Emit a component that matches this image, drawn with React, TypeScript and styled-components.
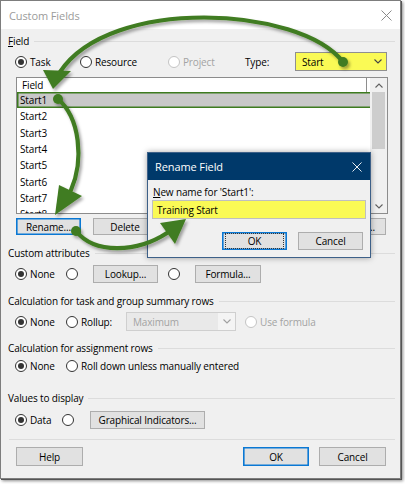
import React from 'react';
import styled, { createGlobalStyle } from 'styled-components';

const Global = createGlobalStyle`
  html, body { margin: 0; padding: 0; background: #ffffff; }
  body {
    font-family: "Open Sans", "Noto Sans", sans-serif;
    font-size: 10px;
    font-weight: 500;
    letter-spacing: -0.15px;
    color: #000;
  }
  * { box-sizing: border-box; }
`;

const Stage = styled.div`
  position: relative;
  width: 405px;
  height: 484px;
  overflow: hidden;
`;

const Window = styled.div`
  width: 401px;
  height: 479px;
  border: 1px solid #7d7d7d;
  box-shadow: 1px 1px 0 #555, 2px 2px 3px rgba(0, 0, 0, 0.45);
  background: #f0f0f0;
  display: flex;
  flex-direction: column;
`;

const TitleBar = styled.div`
  height: 28px;
  flex: none;
  background: #ffffff;
  display: flex;
  align-items: center;
  justify-content: space-between;
  padding: 0 8px 0 8px;
`;

const TitleText = styled.span<{ $light?: boolean }>`
  font-size: 11px;
  font-weight: 400;
  letter-spacing: -0.1px;
  color: ${(p) => (p.$light ? '#ffffff' : '#9b9b9b')};
`;

const Body = styled.div`
  display: flex;
  flex-direction: column;
  padding: 0 5px 0 7px;
`;

const GroupHeader = styled.div<{ $mt: number }>`
  display: flex;
  align-items: center;
  gap: 5px;
  height: 14px;
  margin-top: ${(p) => p.$mt}px;
`;

const Rule = styled.div`
  flex: 1;
  height: 1px;
  background: #dcdcdc;
`;

const U = styled.span`
  text-decoration: underline;
  text-underline-offset: 1px;
`;

const Row = styled.div<{ $mt: number; $h?: number }>`
  display: flex;
  align-items: center;
  height: ${(p) => p.$h ?? 18}px;
  margin-top: ${(p) => p.$mt}px;
  padding-left: 7px;
`;

const Option = styled.div<{ $w?: number; $disabled?: boolean }>`
  display: flex;
  align-items: center;
  gap: 3px;
  flex: none;
  width: ${(p) => (p.$w ? `${p.$w}px` : 'auto')};
  color: ${(p) => (p.$disabled ? '#a3a3a3' : '#000')};
`;

const Radio = styled.span<{ $checked?: boolean; $disabled?: boolean }>`
  width: 12px;
  height: 12px;
  flex: none;
  border-radius: 50%;
  border: 1px solid ${(p) => (p.$disabled ? '#c4c4c4' : '#333333')};
  background: #ffffff;
  display: flex;
  align-items: center;
  justify-content: center;
  &::after {
    content: '';
    width: 6px;
    height: 6px;
    border-radius: 50%;
    background: #333333;
    display: ${(p) => (p.$checked ? 'block' : 'none')};
  }
`;

const Label = styled.span<{ $w?: number }>`
  flex: none;
  width: ${(p) => (p.$w ? `${p.$w}px` : 'auto')};
`;

const Select = styled.div<{ $w: number; $yellow?: boolean; $disabled?: boolean; $ml?: number }>`
  flex: none;
  width: ${(p) => p.$w}px;
  height: 19px;
  margin-left: ${(p) => p.$ml ?? 0}px;
  display: flex;
  align-items: center;
  justify-content: space-between;
  padding-left: 6px;
  background: ${(p) => (p.$yellow ? '#fafa55' : p.$disabled ? '#e9e9e9' : '#fff')};
  border: 1px solid ${(p) => (p.$yellow ? '#8f8f8f' : '#cfcfcf')};
  color: ${(p) => (p.$disabled ? '#a3a3a3' : '#000')};
`;

const ChevronBox = styled.span<{ $disabled?: boolean }>`
  width: 17px;
  height: 100%;
  display: flex;
  align-items: center;
  justify-content: center;
  background: ${(p) => (p.$disabled ? '#f4f4f4' : 'transparent')};
`;

const Chevron = ({ up, color = '#444' }: { up?: boolean; color?: string }) => (
  <svg width="8" height="5" viewBox="0 0 8 5">
    <path
      d={up ? 'M0.5 4.5 L4 1 L7.5 4.5' : 'M0.5 0.5 L4 4 L7.5 0.5'}
      fill="none"
      stroke={color}
      strokeWidth="1.1"
    />
  </svg>
);

const CloseIcon = ({ color, size = 11 }: { color: string; size?: number }) => (
  <svg width={size} height={size} viewBox="0 0 11 11">
    <path d="M0.5 0.5 L10.5 10.5 M10.5 0.5 L0.5 10.5" stroke={color} strokeWidth="1" />
  </svg>
);

const ListBox = styled.div`
  margin: 6px 0 0 8px;
  width: 372px;
  height: 137px;
  border: 1px solid #8c8c8c;
  background: #ffffff;
  display: flex;
  overflow: hidden;
`;

const ListMain = styled.div`
  flex: 1;
  display: flex;
  flex-direction: column;
  overflow: hidden;
`;

const ListHeader = styled.div`
  height: 14px;
  flex: none;
  display: flex;
  align-items: center;
`;

const HeaderCell = styled.div`
  width: 350px;
  height: 100%;
  border-right: 1px solid #8e8e8e;
  padding-left: 5px;
  display: flex;
  align-items: center;
`;

const ListRow = styled.div<{ $selected?: boolean }>`
  height: 16.33px;
  flex: none;
  display: flex;
  align-items: center;
  padding-left: 3px;
  background: ${(p) => (p.$selected ? '#c8c8c8' : '#fff')};
  box-shadow: ${(p) =>
    p.$selected ? 'inset 0 1.5px 0 #3d7b1f, inset 0 -1.5px 0 #3d7b1f, inset 1.5px 0 0 #3d7b1f' : 'none'};
`;

const ScrollBar = styled.div`
  width: 17px;
  flex: none;
  background: #f0f0f0;
  display: flex;
  flex-direction: column;
`;

const ScrollArrow = styled.div`
  height: 14px;
  flex: none;
  display: flex;
  align-items: center;
  justify-content: center;
`;

const Thumb = styled.div`
  height: 57px;
  margin: 0 2px;
  flex: none;
  background: #cdcdcd;
`;

const Grow = styled.div`
  flex: 1;
`;

const Button = styled.div<{ $w: number; $focus?: boolean; $ml?: number; $mr?: number; $h?: number }>`
  flex: none;
  width: ${(p) => p.$w}px;
  height: ${(p) => p.$h ?? 18}px;
  margin-left: ${(p) => p.$ml ?? 0}px;
  margin-right: ${(p) => p.$mr ?? 0}px;
  background: #e1e1e1;
  border: 1px solid ${(p) => (p.$focus ? '#0a78d4' : '#adadad')};
  box-shadow: ${(p) => (p.$focus ? 'inset 0 0 0 0.6px #0a78d4' : 'none')};
  display: flex;
  align-items: center;
  justify-content: center;
  white-space: nowrap;
  overflow: hidden;
`;

const Dotted = styled.span`
  outline: 1px dotted #333;
  padding: 1px 22px;
  line-height: 12px;
`;

const BtnRow = styled.div<{ $mt: number; $pl: number; $h?: number }>`
  display: flex;
  align-items: center;
  margin-top: ${(p) => p.$mt}px;
  padding-left: ${(p) => p.$pl}px;
  height: ${(p) => p.$h ?? 18}px;
`;

const Spacer = styled.div<{ $w: number }>`
  flex: none;
  width: ${(p) => p.$w}px;
`;

const Separator = styled.div`
  height: 1px;
  margin-top: 10px;
  margin-left: 1px;
  background: #dcdcdc;
`;

/* Rename dialog (overlapping the main window) */
const Dialog = styled.div`
  position: absolute;
  left: 147px;
  top: 152px;
  width: 224px;
  height: 106px;
  border: 1px solid #3d6088;
  background: #f0f0f0;
  box-shadow: 0 0 6px rgba(0, 0, 0, 0.35);
  display: flex;
  flex-direction: column;
`;

const DialogTitle = styled.div`
  height: 27px;
  flex: none;
  background: #00396a;
  display: flex;
  align-items: center;
  justify-content: space-between;
  padding: 0 8px 0 7px;
`;

const DialogBody = styled.div`
  display: flex;
  flex-direction: column;
  padding: 5px 4px 0 4px;
`;

const DialogLabel = styled.div`
  height: 14px;
  display: flex;
  align-items: center;
  padding-left: 1px;
`;

const TextInput = styled.div`
  margin-top: 1px;
  height: 19px;
  width: 214px;
  background: #fafa55;
  border: 1px solid #bfbfbf;
  display: flex;
  align-items: center;
  padding-left: 4px;
`;

const DialogButtons = styled.div`
  margin-top: 13px;
  display: flex;
  justify-content: flex-end;
  gap: 11px;
  padding-right: 3px;
`;

const Overlay = styled.svg`
  position: absolute;
  left: 0;
  top: 0;
  pointer-events: none;
`;

const GREEN = '#417c20';

const Arrows = () => (
  <Overlay width="405" height="484" viewBox="0 0 405 484">
    <defs>
      <filter id="sh" x="-10%" y="-10%" width="130%" height="130%">
        <feDropShadow dx="2" dy="2.5" stdDeviation="1.4" floodColor="#000" floodOpacity="0.35" />
      </filter>
    </defs>
    <g filter="url(#sh)" fill={GREEN} stroke={GREEN}>
      <path d="M343 62 C300 6, 110 -4, 60 72" fill="none" strokeWidth="4.2" strokeLinecap="round" />
      <circle cx="343" cy="62" r="5" stroke="none" />
      <polygon points="53,89 43,70 71,71" stroke="none" />
      <path d="M58 99 C80 118, 84 160, 71 190" fill="none" strokeWidth="4.2" strokeLinecap="round" />
      <circle cx="58" cy="99" r="5" stroke="none" />
      <polygon points="55,215 59,185 82,196" stroke="none" />
      <path d="M76 231 C95 255, 138 252, 167 233" fill="none" strokeWidth="4.2" strokeLinecap="round" />
      <circle cx="76" cy="231" r="5" stroke="none" />
      <polygon points="186,219 160,223 175,244" stroke="none" />
    </g>
  </Overlay>
);

const rows = ['Start1', 'Start2', 'Start3', 'Start4', 'Start5', 'Start6', 'Start7', 'Start8'];

export default function App() {
  return (
    <>
      <Global />
      <Stage>
        <Window>
          <TitleBar>
            <TitleText>Custom Fields</TitleText>
            <CloseIcon color="#8a8a8a" />
          </TitleBar>
          <Body>
            <GroupHeader $mt={5}>
              <span>
                <U>F</U>ield
              </span>
              <Rule />
            </GroupHeader>
            <Row $mt={4} $h={19}>
              <Option $w={65}>
                <Radio $checked />
                Task
              </Option>
              <Option $w={88}>
                <Radio />
                Resource
              </Option>
              <Option $w={77} $disabled>
                <Radio $disabled />
                Project
              </Option>
              <Label $w={50}>Type:</Label>
              <Select $w={92} $yellow>
                Start
                <ChevronBox>
                  <Chevron />
                </ChevronBox>
              </Select>
            </Row>
            <ListBox>
              <ListMain>
                <ListHeader>
                  <HeaderCell>Field</HeaderCell>
                </ListHeader>
                {rows.map((r, i) => (
                  <ListRow key={r} $selected={i === 0}>
                    {r}
                  </ListRow>
                ))}
              </ListMain>
              <ScrollBar>
                <ScrollArrow>
                  <Chevron up color="#606060" />
                </ScrollArrow>
                <Thumb />
                <Grow />
                <ScrollArrow>
                  <Chevron color="#606060" />
                </ScrollArrow>
              </ScrollBar>
            </ListBox>
            <BtnRow $mt={4} $pl={8} $h={17}>
              <Button $w={65} $h={17} $focus>
                Rename...
              </Button>
              <Button $w={64} $h={17} $ml={12}>
                Delete
              </Button>
              <Grow />
              <Button $w={84} $h={17} $mr={9}>
                Import Field...
              </Button>
            </BtnRow>

            <GroupHeader $mt={11}>
              <span>Custom attributes</span>
              <Rule />
            </GroupHeader>
            <Row $mt={5}>
              <Option $w={51}>
                <Radio $checked />
                None
              </Option>
              <Option $w={27}>
                <Radio />
              </Option>
              <Button $w={65}>Lookup...</Button>
              <Spacer $w={10} />
              <Option $w={27}>
                <Radio />
              </Option>
              <Button $w={66}>Formula...</Button>
            </Row>

            <GroupHeader $mt={11}>
              <span>Calculation for task and group summary rows</span>
              <Rule />
            </GroupHeader>
            <Row $mt={4} $h={19}>
              <Option $w={51}>
                <Radio $checked />
                None
              </Option>
              <Option $w={60}>
                <Radio />
                Rollup:
              </Option>
              <Select $w={110} $disabled>
                Maximum
                <ChevronBox $disabled>
                  <Chevron color="#a0a0a0" />
                </ChevronBox>
              </Select>
              <Spacer $w={9} />
              <Option $disabled>
                <Radio $disabled />
                Use formula
              </Option>
            </Row>

            <GroupHeader $mt={10}>
              <span>Calculation for assignment rows</span>
              <Rule />
            </GroupHeader>
            <Row $mt={2}>
              <Option $w={51}>
                <Radio $checked />
                None
              </Option>
              <Option>
                <Radio />
                Roll down unless manually entered
              </Option>
            </Row>

            <GroupHeader $mt={16}>
              <span>Values to display</span>
              <Rule />
            </GroupHeader>
            <Row $mt={6}>
              <Option $w={47}>
                <Radio $checked />
                Data
              </Option>
              <Option $w={28}>
                <Radio />
              </Option>
              <Button $w={115}>Graphical Indicators...</Button>
            </Row>

            <Separator />
            <BtnRow $mt={7} $pl={8} $h={19}>
              <Button $w={67} $h={19}>
                Help
              </Button>
              <Grow />
              <Button $w={66} $h={19} $focus>
                OK
              </Button>
              <Button $w={67} $h={19} $ml={10} $mr={9}>
                Cancel
              </Button>
            </BtnRow>
          </Body>
        </Window>

        <Dialog>
          <DialogTitle>
            <TitleText $light>Rename Field</TitleText>
            <CloseIcon color="#ffffff" size={10} />
          </DialogTitle>
          <DialogBody>
            <DialogLabel>
              <span>
                <U>N</U>ew name for 'Start1':
              </span>
            </DialogLabel>
            <TextInput>Training Start</TextInput>
            <DialogButtons>
              <Button $w={65} $focus>
                <Dotted>OK</Dotted>
              </Button>
              <Button $w={65}>Cancel</Button>
            </DialogButtons>
          </DialogBody>
        </Dialog>

        <Arrows />
      </Stage>
    </>
  );
}
